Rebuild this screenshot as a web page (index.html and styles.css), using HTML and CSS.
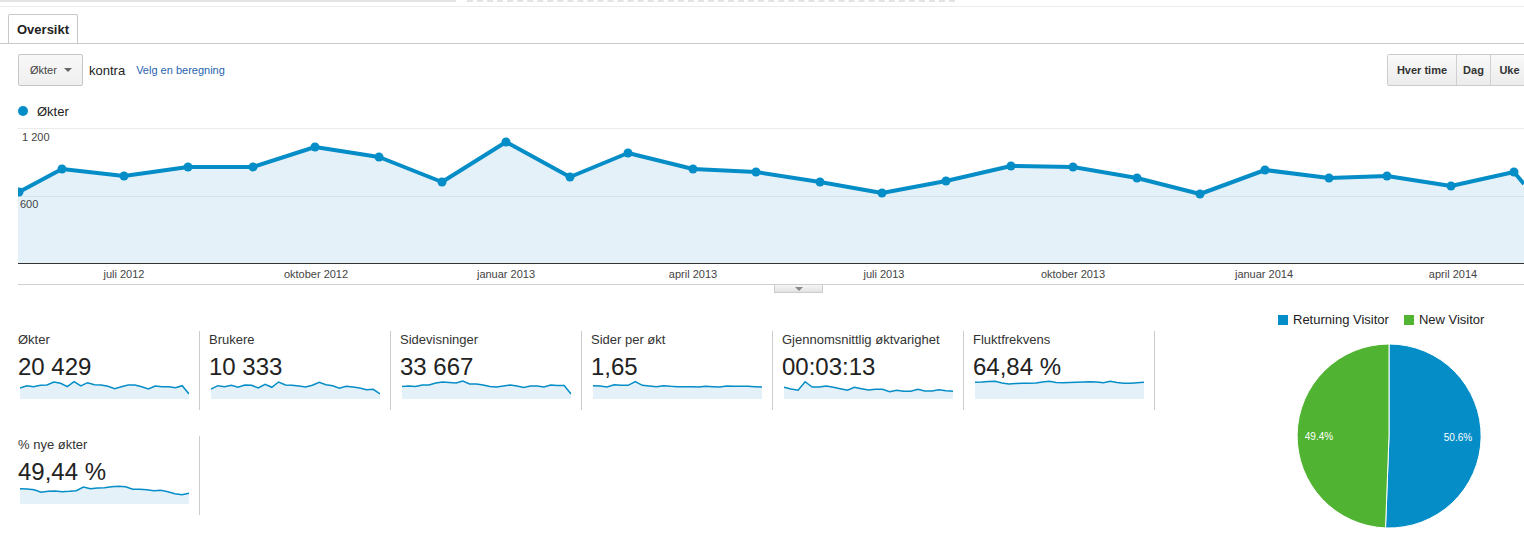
FILE: index.html
```html
<!DOCTYPE html>
<html lang="no">
<head>
    <meta charset="UTF-8">
    <meta name="viewport" content="width=device-width, initial-scale=1.0">
    <title>Oversikt</title>
    <link rel="stylesheet" href="styles.css">
</head>
<body>
    <div class="top-lines">
        <span class="solid"></span>
        <span class="dashed"></span>
    </div>
    <div class="top-rule"></div>

    <div class="tabs">
        <div class="tab">Oversikt</div>
    </div>

    <div class="controls">
        <div class="metric-btn">Økter <span class="caret"></span></div>
        <span class="versus">kontra</span>
        <a href="#" class="pick-metric">Velg en beregning</a>
        <div class="interval-group">
            <button class="hour">Hver time</button>
            <button class="day">Dag</button>
            <button class="week">Uke</button>
        </div>
    </div>

    <div class="series-legend">
        <span class="dot"></span>
        <span>Økter</span>
    </div>

    <svg class="trend" width="1506" height="157" viewBox="0 0 1506 157">
        <line class="grid-top" x1="0" y1="0.5" x2="1506" y2="0.5"/>
        <polygon class="trend-fill" points="0,135 0,64 1,64 44,41 106,48 170,39 235,39 297,19 361,29 424,54 488,14 552,49 610,25 675,41 738,44 802,54 864,65 928,53 993,38 1055,39 1119,50 1182,66 1247,42 1311,50 1369,48 1433,58 1496,44 1506,56 1506,135"/>
        <line class="grid-mid" x1="0" y1="68.5" x2="1506" y2="68.5"/>
        <polyline class="trend-line" points="1,64 44,41 106,48 170,39 235,39 297,19 361,29 424,54 488,14 552,49 610,25 675,41 738,44 802,54 864,65 928,53 993,38 1055,39 1119,50 1182,66 1247,42 1311,50 1369,48 1433,58 1496,44 1506,56"/>
        <g class="trend-points">
            <circle cx="1" cy="64" r="4.5"/>
            <circle cx="44" cy="41" r="4.5"/>
            <circle cx="106" cy="48" r="4.5"/>
            <circle cx="170" cy="39" r="4.5"/>
            <circle cx="235" cy="39" r="4.5"/>
            <circle cx="297" cy="19" r="4.5"/>
            <circle cx="361" cy="29" r="4.5"/>
            <circle cx="424" cy="54" r="4.5"/>
            <circle cx="488" cy="14" r="4.5"/>
            <circle cx="552" cy="49" r="4.5"/>
            <circle cx="610" cy="25" r="4.5"/>
            <circle cx="675" cy="41" r="4.5"/>
            <circle cx="738" cy="44" r="4.5"/>
            <circle cx="802" cy="54" r="4.5"/>
            <circle cx="864" cy="65" r="4.5"/>
            <circle cx="928" cy="53" r="4.5"/>
            <circle cx="993" cy="38" r="4.5"/>
            <circle cx="1055" cy="39" r="4.5"/>
            <circle cx="1119" cy="50" r="4.5"/>
            <circle cx="1182" cy="66" r="4.5"/>
            <circle cx="1247" cy="42" r="4.5"/>
            <circle cx="1311" cy="50" r="4.5"/>
            <circle cx="1369" cy="48" r="4.5"/>
            <circle cx="1433" cy="58" r="4.5"/>
            <circle cx="1496" cy="44" r="4.5"/>
        </g>
        <text class="y-label" x="4" y="13">1 200</text>
        <text class="y-label" x="2" y="80">600</text>
        <line class="axis" x1="0" y1="135.5" x2="1506" y2="135.5"/>
        <g class="x-labels">
            <text x="106" y="150">juli 2012</text>
            <text x="298" y="150">oktober 2012</text>
            <text x="488" y="150">januar 2013</text>
            <text x="675" y="150">april 2013</text>
            <text x="866" y="150">juli 2013</text>
            <text x="1055" y="150">oktober 2013</text>
            <text x="1246" y="150">januar 2014</text>
            <text x="1435" y="150">april 2014</text>
        </g>
        <line class="grid-bottom" x1="0" y1="156.5" x2="1506" y2="156.5"/>
    </svg>
    <div class="trend-toggle"><span class="caret"></span></div>

    <div class="summary">
        <div class="metrics">
            <div class="metric">
                <div class="metric-label">Økter</div>
                <div class="metric-value">20 429</div>
                <svg class="spark" width="169" height="20" data-values="9,6.7,7.7,6.3,6,3,4.3,7.7,2.7,7,3.7,5.7,6,7.3,9.7,7.7,6,6,7.7,10,7,7.7,7.7,8.7,6.7,15"></svg>
            </div>
            <div class="metric">
                <div class="metric-label">Brukere</div>
                <div class="metric-value">10 333</div>
                <svg class="spark" width="169" height="20" data-values="10,6.7,7.7,6.3,8.3,6,6.3,9,5.3,8.3,3,6,6.3,7,8,6.3,3.3,5.7,6.7,9.3,7.3,8,9,10.7,10.3,15"></svg>
            </div>
            <div class="metric">
                <div class="metric-label">Sidevisninger</div>
                <div class="metric-value">33 667</div>
                <svg class="spark" width="169" height="20" data-values="7.5,7,7.5,6,6,4,3,3.5,4,2,5,5,6,7.5,8,7,6,7,8.5,7,7,8,6,6.5,6.5,15"></svg>
            </div>
            <div class="metric">
                <div class="metric-label">Sider per økt</div>
                <div class="metric-value">1,65</div>
                <svg class="spark" width="169" height="20" data-values="6.7,7,8,5.7,6.3,6.3,2.7,6.3,7,7.7,6.7,7.3,7.7,7.7,7.7,8,7.3,7.7,8,7,7.3,7.3,7.3,7.7,8"></svg>
            </div>
            <div class="metric">
                <div class="metric-label">Gjennomsnittlig øktvarighet</div>
                <div class="metric-value">00:03:13</div>
                <svg class="spark" width="169" height="20" data-values="8.3,10,11.3,2.7,8,8,7,8.3,9.7,11.3,8.3,9.7,11,10.3,10.3,12.7,11.3,12.3,12.3,10.3,12,12,10.7,11.7,12.3"></svg>
            </div>
            <div class="metric">
                <div class="metric-label">Fluktfrekvens</div>
                <div class="metric-value">64,84 %</div>
                <svg class="spark" width="169" height="20" data-values="3.3,3,2.5,2.3,4,5,4.5,4.3,4.3,4,3,2.3,3.5,3.7,3.5,3.3,3,2.7,3,3.7,2.3,3.5,4.3,4.3,3.8,3.3"></svg>
            </div>
            <div class="metric">
                <div class="metric-label">% nye økter</div>
                <div class="metric-value">49,44 %</div>
                <svg class="spark" width="169" height="20" data-values="4.7,5,5.7,8.3,7.3,7,7.7,7.3,6.7,3,4.7,4,3.7,2.7,2.3,2.7,5.3,5.3,5.7,6.7,6.3,7.7,9.7,10.7,9.3"></svg>
            </div>
        </div>

        <div class="visitor-pie">
            <div class="pie-legend">
                <span class="swatch returning"></span><span class="legend-text">Returning Visitor</span>
                <span class="swatch new"></span><span class="legend-text">New Visitor</span>
            </div>
            <svg class="pie" width="190" height="190" viewBox="0 0 190 190">
                <path class="slice-returning" d="M95,95 L95,3 A92,92 0 1,1 91.53,186.93 Z"/>
                <path class="slice-new" d="M95,95 L91.53,186.93 A92,92 0 0,1 95,3 Z"/>
                <text class="pie-label" x="164" y="100">50.6%</text>
                <text class="pie-label" x="25" y="99">49.4%</text>
            </svg>
        </div>
    </div>

    <script>
        // build the small sparklines from their data-values
        document.querySelectorAll('.spark').forEach(svg => {
            const vals = svg.dataset.values.split(',').map(Number);
            const step = 169 / (vals.length - 1);
            const pts = vals.map((v, i) => (i * step).toFixed(1) + ',' + v).join(' ');
            svg.innerHTML = '<polygon class="spark-fill" points="0,20 ' + pts + ' 169,20"/>' +
                '<polyline class="spark-line" points="' + pts + '"/>';
        });
    </script>
</body>
</html>
```

FILE: styles.css
```css
body {
    margin: 0;
    font-family: "Liberation Sans", Arial, sans-serif;
    color: #222;
    background-color: #fff;
    overflow: hidden;
}
.top-lines {
    display: flex;
    height: 6px;
}
.top-lines .solid {
    width: 456px;
    height: 2px;
    background-color: #e3e3e3;
}
.top-lines .dashed {
    width: 488px;
    margin-left: 11px;
    height: 0;
    border-top: 2px dashed #e3e3e3;
}
.top-rule {
    height: 1px;
    background-color: #ebebeb;
}
.tabs {
    display: flex;
    padding: 7px 0 0 8px;
    border-bottom: 1px solid #c8c8c8;
}
.tab {
    height: 28px;
    line-height: 30px;
    padding: 0 8px;
    border: 1px solid #c8c8c8;
    border-bottom: none;
    border-radius: 2px 2px 0 0;
    font-size: 13px;
    font-weight: bold;
    color: #222;
}
.controls {
    display: flex;
    align-items: center;
    padding: 10px 0 0 18px;
}
.metric-btn {
    display: flex;
    align-items: center;
    justify-content: space-between;
    box-sizing: border-box;
    width: 65px;
    height: 32px;
    padding: 0 10px 0 11px;
    border: 1px solid #c6c6c6;
    border-radius: 2px;
    background: linear-gradient(#f8f8f8, #efefef);
    font-size: 11px;
    color: #444;
}
.caret {
    width: 0;
    height: 0;
    border-left: 4px solid transparent;
    border-right: 4px solid transparent;
    border-top: 4px solid #666;
}
.versus {
    margin-left: 6px;
    font-size: 13px;
    color: #222;
}
.pick-metric {
    margin-left: 11px;
    font-size: 11px;
    color: #1f63b0;
    text-decoration: none;
}
.interval-group {
    display: flex;
    box-sizing: border-box;
    height: 32px;
    margin-left: auto;
    margin-right: -5px;
    border: 1px solid #ccc;
    border-radius: 2px;
}
.interval-group button {
    box-sizing: border-box;
    padding: 0;
    border: none;
    border-left: 1px solid #d0d0d0;
    background: linear-gradient(#f9f9f9, #ececec);
    font: bold 11px "Liberation Sans", Arial, sans-serif;
    color: #333;
}
.interval-group .hour {
    width: 68px;
    border-left: none;
}
.interval-group .day {
    width: 34px;
}
.interval-group .week {
    width: 38px;
}
.series-legend {
    display: flex;
    align-items: center;
    gap: 9px;
    height: 16px;
    margin: 17px 0 0 18px;
    font-size: 13px;
}
.dot {
    width: 10px;
    height: 10px;
    border-radius: 50%;
    background-color: #058dc7;
}
.trend {
    display: block;
    margin: 9px 0 0 18px;
}
.grid-top {
    stroke: #ebebeb;
}
.grid-mid {
    stroke: #d6e3ea;
}
.grid-bottom {
    stroke: #cfcfcf;
}
.axis {
    stroke: #333;
}
.trend-fill {
    fill: #e5f1f9;
}
.trend-line {
    fill: none;
    stroke: #058dc7;
    stroke-width: 4;
    stroke-linejoin: round;
}
.trend-points circle {
    fill: #058dc7;
}
.y-label,
.x-labels text {
    font-size: 11px;
    fill: #444;
}
.x-labels text {
    text-anchor: middle;
}
.trend-toggle {
    display: flex;
    justify-content: center;
    align-items: center;
    box-sizing: border-box;
    width: 49px;
    height: 8px;
    margin-left: 774px;
    border: 1px solid #ccc;
    border-top: none;
    background: linear-gradient(#f6f6f6, #e2e2e2);
}
.trend-toggle .caret {
    border-top: 4px solid #888;
}
.summary {
    display: flex;
    align-items: flex-start;
    padding-top: 20px;
}
.metrics {
    display: grid;
    grid-template-columns: repeat(6, 182px);
    column-gap: 9px;
    row-gap: 26px;
    margin: 18px 0 0 18px;
}
.metric {
    box-sizing: border-box;
    height: 79px;
    padding-top: 1px;
    border-right: 1px solid #ccc;
}
.metric-label {
    font-size: 13px;
    line-height: 16px;
    color: #333;
}
.metric-value {
    margin-top: 5px;
    font-size: 24px;
    line-height: 28px;
    color: #222;
}
.spark {
    display: block;
    margin: -2px 0 0 2px;
}
.spark-fill {
    fill: #e5f1f9;
}
.spark-line {
    fill: none;
    stroke: #058dc7;
    stroke-width: 1.5;
}
.visitor-pie {
    width: 246px;
    margin-left: auto;
}
.pie-legend {
    display: flex;
    align-items: center;
    height: 13px;
    font-size: 13px;
    color: #222;
}
.swatch {
    width: 10px;
    height: 10px;
    margin-right: 5px;
}
.swatch.returning {
    background-color: #058dc7;
}
.swatch.new {
    background-color: #50b432;
}
.legend-text {
    margin-right: 15px;
}
.pie {
    display: block;
    margin: 15px 0 0 16px;
}
.slice-returning {
    fill: #058dc7;
    stroke: #fff;
    stroke-width: 1;
}
.slice-new {
    fill: #50b432;
    stroke: #fff;
    stroke-width: 1;
}
.pie-label {
    font-size: 10px;
    fill: #fff;
    text-anchor: middle;
}
```
